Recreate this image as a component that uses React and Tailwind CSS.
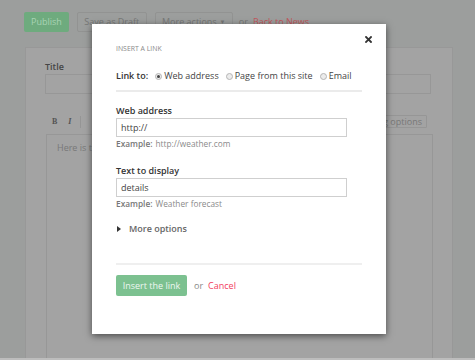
import React from 'react';

function Radio({ checked, label }) {
  return (
    <label className="flex items-center gap-[2px]">
      <span className="w-[7px] h-[7px] rounded-full border border-[#b5b5b5] bg-[#ececec] flex items-center justify-center">
        {checked && <span className="w-[3px] h-[3px] rounded-full bg-[#444]" />}
      </span>
      <span>{label}</span>
    </label>
  );
}

function Field({ label, value, example, hint }) {
  return (
    <div>
      <div className="text-[9px] leading-[12px] font-semibold text-[#333]">{label}</div>
      <div className="mt-[1px] w-[231px] h-[19px] border border-[#cfcfcf] flex items-center pl-[4px] text-[9px] text-[#444]">
        {value}
      </div>
      <div className="mt-[1px] flex gap-[3px] text-[8.3px] leading-[12px] text-[#8a8a8a]">
        <span className="font-semibold text-[#777]">{example}</span>
        <span>{hint}</span>
      </div>
    </div>
  );
}

export default function App() {
  return (
    <div className="relative w-[475px] h-[360px] overflow-hidden bg-[#9c9e9d] flex flex-col border-b-2 border-[#bdbdbd] font-['Open_Sans',sans-serif]">
      {/* dimmed page behind the dialog */}
      <div className="flex items-center pl-[24px] pt-[12px] text-[9px] text-[#767776]">
        <div className="h-[20px] px-[7px] rounded-[2px] bg-[#6eab7e] text-[#a9d3b4] flex items-center">Publish</div>
        <div className="ml-[8px] h-[20px] w-[70px] rounded-[2px] border border-[#929392] flex items-center justify-center">Save as Draft</div>
        <div className="ml-[8px] h-[20px] w-[78px] rounded-[2px] border border-[#929392] flex items-center justify-center gap-[3px]">
          More actions <span className="text-[6px]">▼</span>
        </div>
        <span className="ml-[6px]">or</span>
        <span className="ml-[5px] text-[#c0565b]">Back to News</span>
      </div>

      <div className="mt-[15px] ml-[25px] w-[428px] flex-1 flex flex-col bg-[#a3a3a3] border-l border-t border-r border-[#989898] pl-[19px] pt-[13px]">
        <div className="text-[9px] leading-[12px] font-semibold text-[#454545]">Title</div>
        <div className="mt-[1px] w-[386px] h-[20px] border border-[#979797]" />
        <div className="mt-[21px] w-[382px] h-[13px] flex items-center text-[#545454]">
          <span className="ml-[7px] text-[8px] font-bold font-['Liberation_Serif',serif]">B</span>
          <span className="ml-[11px] text-[8px] italic font-bold font-['Liberation_Serif',serif]">I</span>
          <span className="ml-[9px] w-px h-[12px] bg-[#959595]" />
          <div className="ml-auto h-[13px] px-[4px] border border-[#969696] rounded-[1px] flex items-center text-[9px] text-[#777]">
            Hide formatting options
          </div>
        </div>
        <div className="mt-[6px] ml-[1px] w-[387px] flex-1 border-l border-t border-r border-[#979797] pl-[10px] pt-[7px] text-[9px] text-[#787878] leading-[12px]">
          Here is the
        </div>
      </div>

      {/* dialog */}
      <div className="absolute left-[92px] top-[24px] w-[294px] h-[310px] bg-white shadow-[0_2px_7px_rgba(0,0,0,0.55)] pl-[24px] pr-[24px] pt-[20px]">
        <button className="absolute top-[12px] right-[14px] w-[7px] h-[7px] flex">
          <svg width="7" height="7" viewBox="0 0 7 7">
            <path d="M1 1L6 6M6 1L1 6" stroke="#333" strokeWidth="1.8" strokeLinecap="square" />
          </svg>
        </button>
        <div className="text-[6.9px] leading-[10px] text-[#8a8a8a]">INSERT A LINK</div>

        <div className="mt-[16px] flex items-center text-[9px] leading-[12px] text-[#444]">
          <span className="font-semibold text-[#333] mr-[7px]">Link to:</span>
          <Radio checked label="Web address" />
          <span className="w-[7px]" />
          <Radio label="Page from this site" />
          <span className="w-[7px]" />
          <Radio label="Email" />
        </div>
        <div className="mt-[8px] h-[2px] bg-[#ebebeb]" />

        <div className="mt-[13px]">
          <Field label="Web address" value="http://" example="Example:" hint="http://weather.com" />
        </div>
        <div className="mt-[15px]">
          <Field label="Text to display" value="details" example="Example:" hint="Weather forecast" />
        </div>

        <div className="mt-[13px] flex items-center text-[9px] leading-[12px] font-semibold text-[#666]">
          <svg width="4" height="6" viewBox="0 0 4 6" className="ml-[1px]">
            <path d="M0 0L4 3L0 6Z" fill="#333" />
          </svg>
          <span className="ml-[8px]">More options</span>
        </div>

        <div className="mt-[28px] h-[2px] bg-[#efefef]" />

        <div className="mt-[10px] flex items-center text-[9px]">
          <div className="w-[71px] h-[21px] rounded-[2px] bg-[#7cc190] text-[#eef7f0] flex items-center justify-center">
            Insert the link
          </div>
          <span className="ml-[7px] text-[#888]">or</span>
          <span className="ml-[5px] text-[#f23d5e]">Cancel</span>
        </div>
      </div>
    </div>
  );
}
